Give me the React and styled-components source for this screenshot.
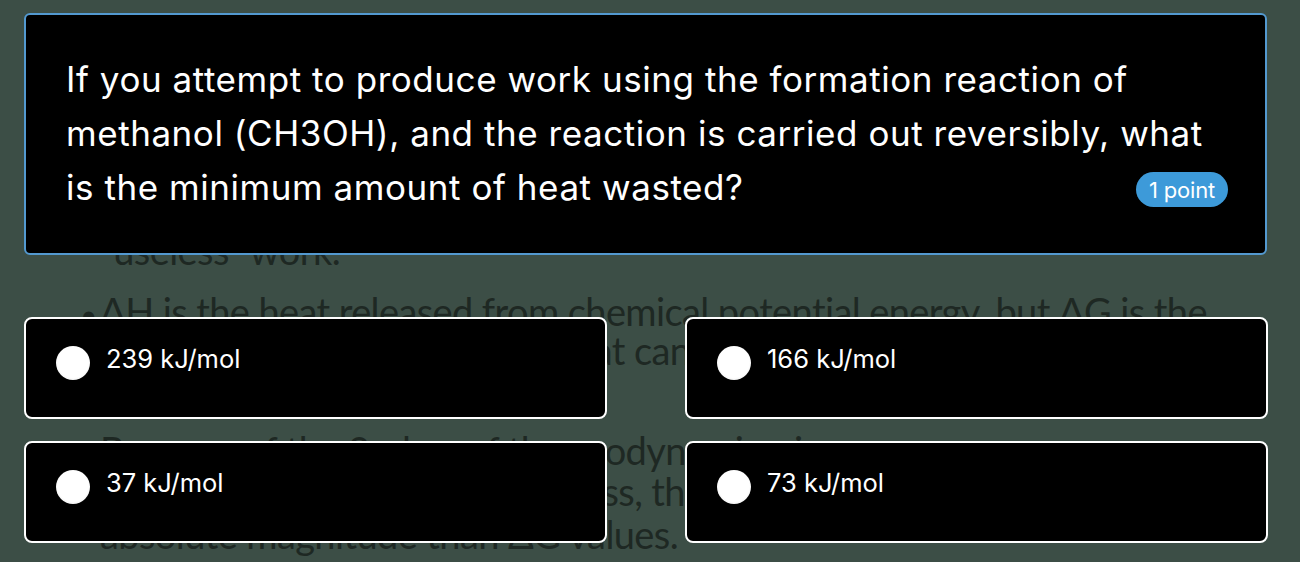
import React from "react";
import styled, { createGlobalStyle } from "styled-components";

const Global = createGlobalStyle`
  html, body { margin: 0; padding: 0; background: #3c4e46; }
  * { box-sizing: border-box; }
`;

const Page = styled.div`
  position: relative;
  width: 1300px;
  height: 562px;
  overflow: hidden;
  background: #3c4e46;
`;

const Slide = styled.div`
  display: flex;
  flex-direction: column;
  padding: 231px 0 0 78px;
  font-family: "Lato", "Open Sans", sans-serif;
  font-size: 38px;
  line-height: 39px;
  color: #1e2823;
  letter-spacing: -0.6px;
`;

const SlideLine = styled.div`
  display: flex;
  align-items: baseline;
  white-space: nowrap;
  height: 39px;
  margin-top: ${(p) => p.gap || 0}px;
  padding-left: ${(p) => (p.bullet ? 2 : 22)}px;
`;

const Bullet = styled.span`
  width: 20px;
  font-size: 30px;
`;

const Sup = styled.sup`
  font-size: 22px;
  line-height: 0;
`;

const Overlay = styled.div`
  position: absolute;
  inset: 0;
  display: flex;
  flex-direction: column;
  padding: 13px 33px 0 24px;
  font-family: "Inter", "Lato", sans-serif;
  color: #fff;
`;

const QuestionCard = styled.div`
  position: relative;
  height: 242px;
  background: #000;
  border: 2px solid #5399d0;
  border-radius: 6px;
  padding: 37px 40px 0 40px;
`;

const QuestionText = styled.p`
  margin: 0;
  font-size: 35px;
  line-height: 54px;
  letter-spacing: 0.55px;
  white-space: nowrap;
`;

const PointBadge = styled.span`
  position: absolute;
  right: 37px;
  bottom: 46px;
  height: 35px;
  padding: 0 13px;
  display: flex;
  align-items: center;
  border-radius: 18px;
  background: #3d9ad9;
  color: #fff;
  font-size: 22px;
  letter-spacing: -0.2px;
`;

const OptionsGrid = styled.div`
  margin-top: 62px;
  display: grid;
  grid-template-columns: 583px 583px;
  column-gap: 78px;
  row-gap: 22px;
`;

const OptionCard = styled.div`
  height: 102px;
  background: #000;
  border: 2px solid #fff;
  border-radius: 8px;
  display: flex;
  align-items: flex-start;
  gap: 16px;
  padding: 27px 0 0 30px;
`;

const Radio = styled.span`
  flex: none;
  width: 34px;
  height: 34px;
  border-radius: 50%;
  background: radial-gradient(circle at 50% 48%, #ffffff 62%, #e6e6e6 85%, #bdbdbd 100%);
`;

const OptionLabel = styled.span`
  font-size: 25.5px;
  line-height: 34px;
  letter-spacing: 0;
  margin-top: -4px;
`;

const options = ["239 kJ/mol", "166 kJ/mol", "37 kJ/mol", "73 kJ/mol"];

export default function App() {
  return (
    <>
      <Global />
      <Page>
        <Slide>
          <SlideLine>“useless” work.</SlideLine>
          <SlideLine bullet gap={22}>
            <Bullet>•</Bullet>ΔH is the heat released from chemical potential energy, but ΔG is the
          </SlideLine>
          <SlideLine>maximum amount of energy that can be used to do work.</SlideLine>
          <SlideLine bullet gap={61}>
            <Bullet>•</Bullet>Because of the 2<Sup>nd</Sup>&nbsp;law of thermodynamics, in any
          </SlideLine>
          <SlideLine gap={2}>for any real, spontaneous process, the ΔH values have a larger</SlideLine>
          <SlideLine gap={4}>absolute magnitude than ΔG values.</SlideLine>
        </Slide>
        <Overlay>
          <QuestionCard>
            <QuestionText>
              If you attempt to produce work using the formation reaction of
              <br />
              methanol (CH3OH), and the reaction is carried out reversibly, what
              <br />
              is the minimum amount of heat wasted?
            </QuestionText>
            <PointBadge>1 point</PointBadge>
          </QuestionCard>
          <OptionsGrid>
            {options.map((o) => (
              <OptionCard key={o}>
                <Radio />
                <OptionLabel>{o}</OptionLabel>
              </OptionCard>
            ))}
          </OptionsGrid>
        </Overlay>
      </Page>
    </>
  );
}
